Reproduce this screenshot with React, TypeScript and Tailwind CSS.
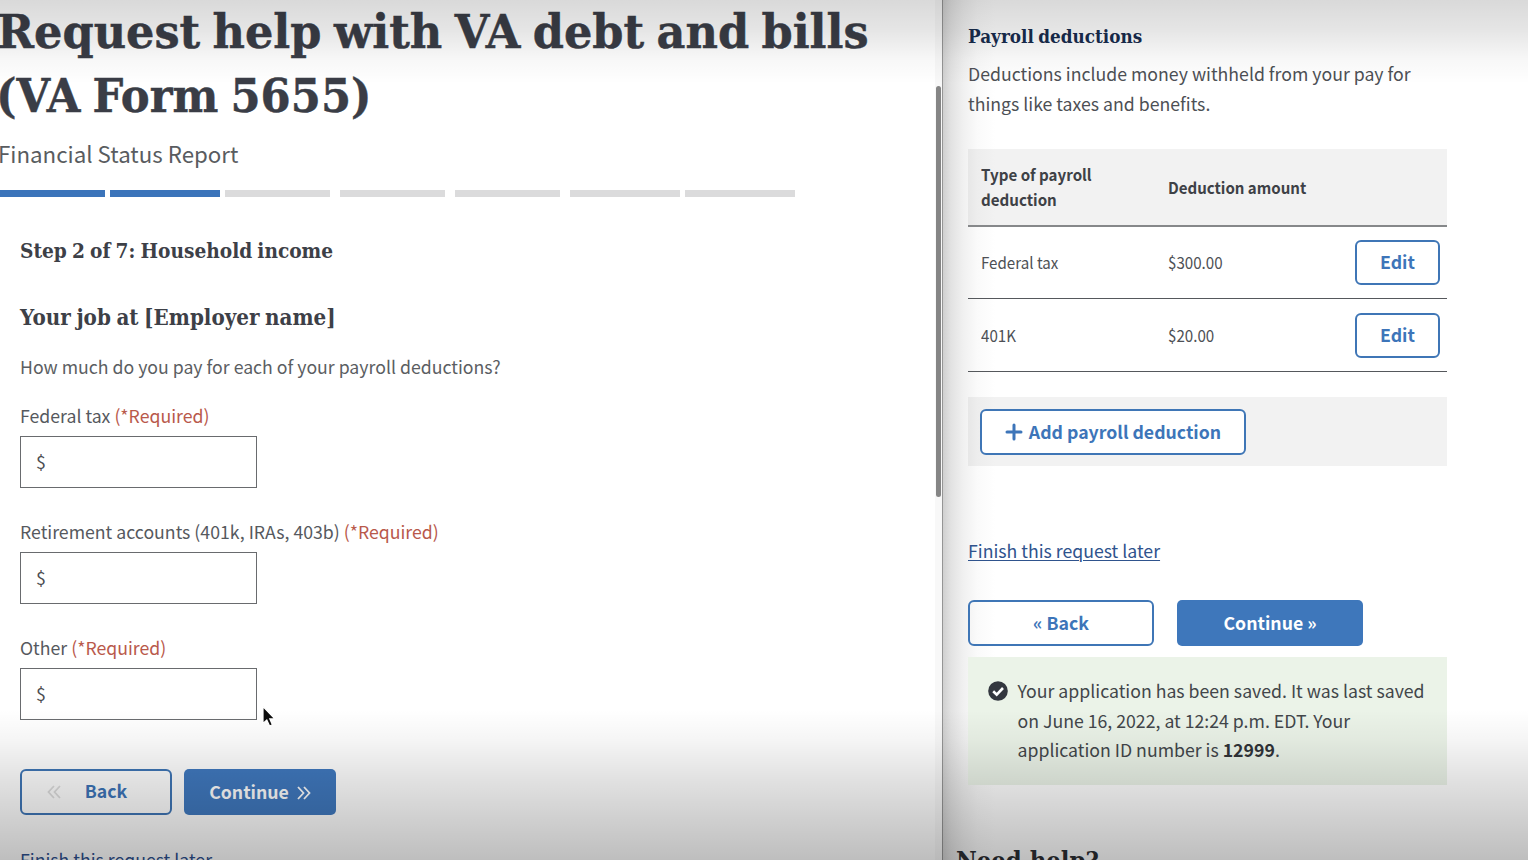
import type { ReactNode } from "react";

const sans = "font-['Noto_Sans_CJK_SC','Open_Sans',sans-serif]";
const serif = "origin-left whitespace-nowrap font-['DejaVu_Serif',serif] font-bold";

const steps = [
  "w-[105px] bg-[#3b74ba]",
  "ml-[5px] w-[110px] bg-[#3b74ba]",
  "ml-[5px] w-[105px] bg-[#dbdbdc]",
  "ml-[10px] w-[105px] bg-[#dbdbdc]",
  "ml-[10px] w-[105px] bg-[#dbdbdc]",
  "ml-[10px] w-[110px] bg-[#dbdbdc]",
  "ml-[5px] w-[110px] bg-[#dbdbdc]",
];

function MoneyField({ label }: { label: string }) {
  return (
    <div className="mb-[30px] h-[86px]">
      <label className="block h-[34px] whitespace-nowrap leading-[26px] text-[#56595e]">
        {label} <span className="text-[#b9594b]">(*Required)</span>
      </label>
      <div className="flex h-[52px] w-[237px] items-center border border-[#696b6e] bg-white pb-[2px] pl-[15px] text-[#4a4c50]">
        $
      </div>
    </div>
  );
}

function Row({ name, amount }: { name: string; amount: string }) {
  return (
    <div className="flex h-[73px] items-center border-b border-[#55585c] pr-[7px] pl-[13px] text-[16px] text-[#4d5055]">
      <div className="w-[187px]">
        <span className="inline-block origin-left scale-x-[0.945]">{name}</span>
      </div>
      <div className="flex-1">
        <span className="inline-block origin-left scale-x-[0.945]">{amount}</span>
      </div>
      <Outline className="h-[45px] w-[85px] bg-white">Edit</Outline>
    </div>
  );
}

function Outline({ className, children }: { className: string; children: ReactNode }) {
  return (
    <button
      className={
        "flex shrink-0 items-center justify-center rounded-[6px] border-2 border-[#3f76b6] text-[17.7px] leading-none font-bold whitespace-nowrap text-[#3d75b9] " +
        className
      }
    >
      {children}
    </button>
  );
}

function Chevrons({ flip }: { flip?: boolean }) {
  return (
    <svg
      width="14"
      height="14"
      viewBox="0 0 14 14"
      fill="none"
      stroke="currentColor"
      strokeWidth="1.8"
      className={flip ? "translate-y-px rotate-180" : "translate-y-px"}
    >
      <path d="M1 1 L6.5 7 L1 13 M7 1 L12.5 7 L7 13" />
    </svg>
  );
}

function LeftPane() {
  return (
    <main className="relative flex h-full w-[943px] shrink-0 overflow-hidden bg-white">
      <div className="w-[935px] shrink-0">
        <h1
          className={
            serif +
            " -ml-[2px] h-[128px] text-[47px] leading-[64px] [word-spacing:-3.3px] text-[#3a3d46] [-webkit-text-stroke:0.5px_#3a3d46]"
          }
        >
          <span className="-ml-[1px] block w-max origin-left scale-x-[0.949]">Request help with VA debt and bills</span>
          <span className="-ml-[2px] block w-max origin-left scale-x-[0.922]">(VA Form 5655)</span>
        </h1>
        <p className="-ml-[2px] h-[62px] text-[22.3px] leading-[50px] text-[#595c60]">Financial Status Report</p>
        <div className="flex h-[7px]">
          {steps.map((s, i) => (
            <div key={i} className={s} />
          ))}
        </div>
        <div className="pl-5 text-[17.7px]">
          <h2
            className={
              serif +
              " mt-[34px] h-10 w-max scale-x-[0.907] text-[20.5px] leading-10 [word-spacing:-1.5px] text-[#3d4047]"
            }
          >
            Step 2 of 7: Household income
          </h2>
          <h3
            className={
              serif +
              " mt-[27px] h-10 w-max scale-x-[0.928] text-[21.5px] leading-10 [word-spacing:-1.5px] text-[#3d4047]"
            }
          >
            Your job at [Employer name]
          </h3>
          <p className="mt-[12px] mb-[20px] h-8 leading-8 text-[#5b5e62]">
            How much do you pay for each of your payroll deductions?
          </p>
          <MoneyField label="Federal tax" />
          <MoneyField label="Retirement accounts (401k, IRAs, 403b)" />
          <MoneyField label="Other" />
          <div className="mt-[49px] flex gap-3">
            <Outline className="relative h-[46px] w-[152px] border-[#3a6da9] bg-white pb-[2px] pl-5">
              <span className="absolute left-[25px] text-[#dedede]">
                <Chevrons flip />
              </span>
              Back
            </Outline>
            <button className="flex h-[46px] w-[152px] items-center justify-center gap-2 rounded-[5px] bg-[#4079bf] leading-none font-bold text-white">
              Continue <Chevrons />
            </button>
          </div>
          <a className="mt-[30px] block h-7 w-max leading-7 text-[#2d4f8e]">Finish this request later</a>
        </div>
      </div>
      <div className="w-2 shrink-0 border-r border-[#959595] bg-[#f8f8f8] pt-[86px]">
        <div className="h-[411px] w-[5px] translate-x-px rounded-full bg-[#858585]" />
      </div>
    </main>
  );
}

function RightPane() {
  return (
    <aside className="h-full flex-1 overflow-hidden bg-[linear-gradient(to_right,#d0d0d0_0px,#e2e2e2_8px,#f0f0f0_20px,#fafafa_34px,#ffffff_52px)] pl-[25px] text-[17.7px] text-[#4d5055]">
      <h3
        className={
          serif + " mt-[17px] h-10 w-max scale-x-[0.91] text-[18.5px] leading-10 [word-spacing:-1.5px] text-[#182c4e]"
        }
      >
        Payroll deductions
      </h3>
      <p className="mt-[2px] leading-[29.5px] whitespace-nowrap">
        Deductions include money withheld from your pay for
        <br />
        things like taxes and benefits.
      </p>
      <div className="mt-[31px] w-[479px]">
        <div className="flex h-[78px] items-center border-b-2 border-[#86888a] bg-black/5 pl-[13px] text-[16px] leading-[25px] font-bold text-[#3e4146]">
          <div className="w-[187px]">
            <span className="inline-block origin-left scale-x-[0.945]">
              Type of payroll
              <br />
              deduction
            </span>
          </div>
          <span className="inline-block origin-left scale-x-[0.94]">Deduction amount</span>
        </div>
        <div className="-mt-px">
          <Row name="Federal tax" amount="$300.00" />
          <Row name="401K" amount="$20.00" />
        </div>
      </div>
      <div className="mt-[25px] flex h-[69px] w-[479px] items-center bg-black/5 pl-[12px]">
        <Outline className="h-[46px] w-[266px] gap-[6px] bg-white">
          <svg width="18" height="18" viewBox="0 0 18 18" stroke="currentColor" strokeWidth="3" strokeLinecap="round">
            <path d="M9 2V16M2 9H16" />
          </svg>
          Add payroll deduction
        </Outline>
      </div>
      <a className="mt-[68px] block h-8 w-max leading-8 text-[#2f538d] underline decoration-1 underline-offset-[2px]">
        Finish this request later
      </a>
      <div className="mt-[34px] flex gap-[23px]">
        <Outline className="h-[46px] w-[186px]">« Back</Outline>
        <button className="h-[46px] w-[186px] rounded-[5px] bg-[#3e77bb] leading-none font-bold text-white">
          Continue »
        </button>
      </div>
      <div className="mt-[11px] flex h-[128px] w-[479px] gap-[9.5px] bg-[#ebf3e8] pt-[19px] pl-5 leading-[29.7px] whitespace-nowrap text-[#42464a]">
        <svg width="20" height="20" viewBox="0 0 20 20" className="mt-[5px]">
          <circle cx="10" cy="10" r="9.8" fill="#33373f" />
          <path d="M5.2 10.2 L8.7 13.6 L15 7" fill="none" stroke="#fff" strokeWidth="2.6" />
        </svg>
        <p>
          Your application has been saved. It was last saved
          <br />
          on June 16, 2022, at 12:24 p.m. EDT. Your
          <br />
          application ID number is <b className="text-[#303338]">12999</b>.
        </p>
      </div>
      <h2 className={serif + " mt-[56px] -ml-3 h-10 w-max scale-x-[0.95] text-[24px] leading-10 text-[#2c2e33]"}>
        Need help?
      </h2>
    </aside>
  );
}

export default function App() {
  return (
    <div className={"relative flex h-[860px] w-[1528px] overflow-hidden bg-white " + sans}>
      <LeftPane />
      <RightPane />
      <div className="pointer-events-none absolute inset-x-0 top-0 h-[84px] bg-[linear-gradient(to_bottom,rgba(0,0,0,0.15),rgba(0,0,0,0.10)_35%,rgba(0,0,0,0.03)_70%,transparent)]" />
      <div className="pointer-events-none absolute inset-x-0 bottom-0 h-[150px] bg-[linear-gradient(to_bottom,transparent,rgba(0,0,0,0.04)_20%,rgba(0,0,0,0.12)_48%,rgba(0,0,0,0.20)_78%,rgba(0,0,0,0.255))]" />
      <svg className="pointer-events-none absolute top-[704px] left-[260px]" width="18" height="26" viewBox="0 0 18 26">
        <path
          d="M3 2.5 V19.5 L6.8 16 L9.6 22 L12.4 20.7 L9.8 14.9 H14.8 Z"
          fill="#0c0c0c"
          stroke="#fff"
          strokeWidth="1.2"
        />
      </svg>
    </div>
  );
}
